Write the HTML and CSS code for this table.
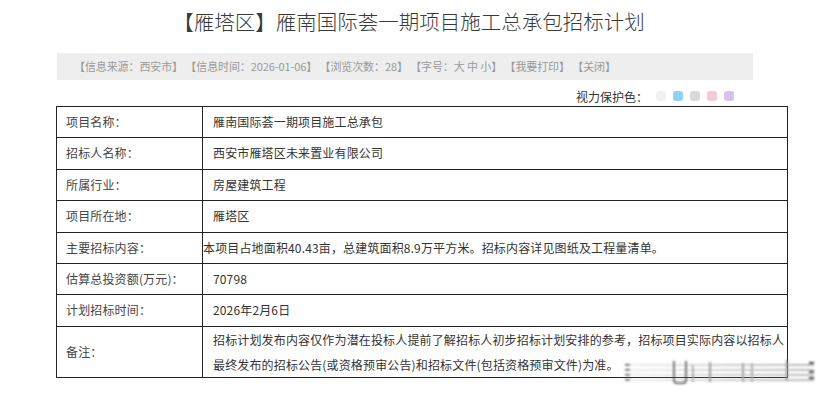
FILE: index.html
```html
<!DOCTYPE html>
<html lang="zh-CN">
<head>
<meta charset="utf-8">
<title>【雁塔区】雁南国际荟一期项目施工总承包招标计划</title>
<link rel="stylesheet" href="styles.css">
</head>
<body>
<div class="page">
  <h1 class="title">【雁塔区】雁南国际荟一期项目施工总承包招标计划</h1>
  <div class="infobar">【信息来源：西安市】 【信息时间：2026-01-06】 【浏览次数：28】 【字号：<span class="size">大</span> <span class="size">中</span> <span class="size">小</span>】 【我要打印】 【关闭】</div>
  <div class="eyecare">
    <span class="eyecare-label">视力保护色：</span>
    <span class="swatch sw-white"></span>
    <span class="swatch sw-blue"></span>
    <span class="swatch sw-gray"></span>
    <span class="swatch sw-pink"></span>
    <span class="swatch sw-purple"></span>
  </div>
  <table class="detail">
    <colgroup><col class="col-label"><col class="col-value"></colgroup>
    <tr><td class="label">项目名称：</td><td class="value">雁南国际荟一期项目施工总承包</td></tr>
    <tr><td class="label">招标人名称：</td><td class="value">西安市雁塔区未来置业有限公司</td></tr>
    <tr><td class="label">所属行业：</td><td class="value">房屋建筑工程</td></tr>
    <tr><td class="label">项目所在地：</td><td class="value">雁塔区</td></tr>
    <tr><td class="label">主要招标内容：</td><td class="value flush">本项目占地面积40.43亩，总建筑面积8.9万平方米。招标内容详见图纸及工程量清单。</td></tr>
    <tr><td class="label">估算总投资额(万元)：</td><td class="value">70798</td></tr>
    <tr><td class="label">计划招标时间：</td><td class="value">2026年2月6日</td></tr>
    <tr class="note-row"><td class="label">备注：</td><td class="value note">招标计划发布内容仅作为潜在投标人提前了解招标人初步招标计划安排的参考，招标项目实际内容以招标人<br>最终发布的招标公告(或资格预审公告)和招标文件(包括资格预审文件)为准。</td></tr>
  </table>
</div>
<svg class="watermark" width="200" height="28" viewBox="0 0 200 28" aria-hidden="true">
  <defs>
    <filter id="blur" x="-10%" y="-50%" width="120%" height="200%"><feGaussianBlur stdDeviation="0.8"/></filter>
    <linearGradient id="fade" x1="0" x2="1" y1="0" y2="0">
      <stop offset="0" stop-color="#cfcfcf" stop-opacity="0.3"/>
      <stop offset="0.5" stop-color="#c4c4c4" stop-opacity="0.8"/>
      <stop offset="1" stop-color="#b0b0b0" stop-opacity="0.9"/>
    </linearGradient>
  </defs>
  <g filter="url(#blur)">
    <rect x="6" y="5" width="188" height="2" fill="url(#fade)"/>
    <rect x="6" y="10" width="188" height="2" fill="url(#fade)"/>
    <rect x="6" y="15" width="188" height="2" fill="url(#fade)"/>
    <rect x="6" y="20" width="188" height="2" fill="url(#fade)"/>
    <rect x="5" y="5" width="5" height="1.5" fill="#555"/>
    <rect x="5" y="10" width="5" height="1.5" fill="#555"/>
    <rect x="5" y="15" width="5" height="1.5" fill="#555"/>
    <rect x="5" y="20" width="5" height="1.5" fill="#555"/>
    <path d="M54 2 V21 Q54 24 57 24 H63 Q66 24 66 21 V2" fill="none" stroke="#444" stroke-width="1.6"/>
    <rect x="72" y="6" width="1.5" height="17" fill="#9a9a9a"/>
    <rect x="89" y="3" width="2" height="20" fill="#9a9a9a"/>
    <rect x="122" y="4" width="2" height="19" fill="#a5a5a5"/>
    <rect x="131" y="4" width="2" height="19" fill="#b0b0b0"/>
    <rect x="166" y="0" width="1.5" height="22" fill="#888"/>
    <rect x="189" y="3" width="5" height="2" fill="#333"/>
    <rect x="189" y="12" width="5" height="2" fill="#333"/>
    <rect x="189" y="18" width="5" height="2" fill="#333"/>
  </g>
</svg>
</body>
</html>
```
FILE: styles.css
```css
html, body {
  margin: 0;
  padding: 0;
  background: #ffffff;
}
body {
  font-family: "Noto Sans CJK SC", "Noto Sans", sans-serif;
  color: #333333;
  position: relative;
  width: 828px;
  height: 395px;
  overflow: hidden;
}
.page {
  width: 696px;
  margin-left: 57px;
}
.title {
  margin: 0;
  padding-top: 7px;
  font-size: 20.5px;
  line-height: 28px;
  font-weight: 300;
  color: #3a3a3a;
  text-align: center;
  padding-left: 8px;
}
.infobar {
  margin-top: 18px;
  height: 27px;
  line-height: 27px;
  background: #eeeeee;
  font-size: 11px;
  letter-spacing: -0.1px;
  color: #9a9a9a;
  padding-left: 17px;
  white-space: nowrap;
}
.infobar .size {
  color: #9a9a9a;
}
.eyecare {
  display: flex;
  align-items: center;
  justify-content: flex-end;
  height: 20px;
  margin-top: 6px;
  padding-right: 19px;
}
.eyecare-label {
  font-size: 12px;
  color: #333333;
  margin-right: 8px;
}
.swatch {
  width: 10px;
  height: 10px;
  border-radius: 3px;
  margin-left: 7px;
}
.swatch.sw-white { margin-left: 0; background: #f2f2f2; }
.sw-blue { background: #8fd3f0; }
.sw-gray { background: #d9d9d9; }
.sw-pink { background: #f6c9d3; }
.sw-purple { background: #d8c2f3; }

.detail {
  margin-left: -1px;
  width: 732px;
  border-collapse: collapse;
  table-layout: fixed;
  font-size: 12px;
  letter-spacing: 0.15px;
  color: #333333;
}
.col-label { width: 146px; }
.detail td {
  border: 1px solid #222222;
  padding: 0;
  line-height: 30.4px;
  white-space: nowrap;
  vertical-align: middle;
}
.detail td.label {
  padding-left: 9px;
  color: #444444;
}
.detail td.value {
  padding-left: 10px;
}
.detail td.value.flush {
  padding-left: 0;
}
.detail td.note {
  line-height: 25px;
  padding-top: 0;
  padding-bottom: 0;
  overflow: visible;
}
.watermark {
  position: absolute;
  left: 620px;
  top: 359px;
}
```
